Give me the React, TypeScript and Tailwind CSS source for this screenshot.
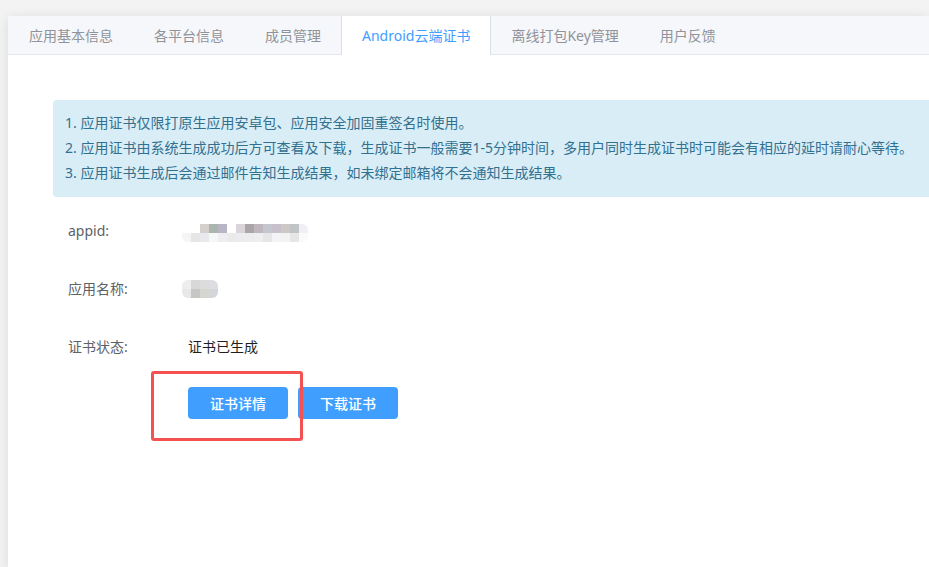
import React from "react";

const tabs = [
  "应用基本信息",
  "各平台信息",
  "成员管理",
  "Android云端证书",
  "离线打包Key管理",
  "用户反馈",
];

const notes = [
  "1. 应用证书仅限打原生应用安卓包、应用安全加固重签名时使用。",
  "2. 应用证书由系统生成成功后方可查看及下载，生成证书一般需要1-5分钟时间，多用户同时生成证书时可能会有相应的延时请耐心等待。",
  "3. 应用证书生成后会通过邮件告知生成结果，如未绑定邮箱将不会通知生成结果。",
];

// pixelated (mosaic) placeholders for hidden values
const appidMosaic = [
  { x: 18, y: 0, colors: ["#d6d0cc", "#a9b5ae", "#b8b5c6", "", "#d9d5d8", "#aaa6a7", "#bfb7bd", "#c4c7d0", "#c8c1cb", "#ccc9c4", "#c0c4c7", "#eef0f5"] },
  { x: 0, y: 9, colors: ["#f5f5f5", "#e6e6e6", "#e8e9ec", "#f6f7f7", "#efedf0", "#eaeaea", "#ececee", "#ebeced", "#eeeeee", "#e6e6e6", "#f4f4f6", "#f3f3f4", "#e8e6e5", "#fafafa"] },
];

const nameMosaic = [
  { x: 0, y: 0, colors: ["#eeeeee", "#d8d8d8", "#dcdcdc", "#dedee2"] },
  { x: 0, y: 9, colors: ["#e8e8e8", "#c6c6c4", "#d6d6d0", "#d4d6d9"] },
];

const Mosaic = ({ rows, width }: { rows: typeof appidMosaic; width: number }) => (
  <svg width={width} height={18} viewBox={`0 0 ${width} 18`}>
    <defs>
      <clipPath id={`c${width}`}>
        <rect x="0" y="0" width={width} height="18" rx="6" />
      </clipPath>
    </defs>
    <g clipPath={`url(#c${width})`}>
      {rows.map((r, i) =>
        r.colors.map((c, j) =>
          c ? <rect key={`${i}-${j}`} x={r.x + j * 9} y={r.y} width="9" height="9" fill={c} /> : null,
        ),
      )}
    </g>
  </svg>
);

const App = () => {
  return (
    <div
      className="h-[567px] w-[929px] overflow-hidden bg-[#f3f3f3] pl-2 pt-4"
      style={{ fontFamily: '"Noto Sans", "Noto Sans CJK SC", sans-serif' }}
    >
      <div className="h-full overflow-hidden bg-white shadow-[0_2px_12px_0_rgba(0,0,0,0.1)]">
        <div className="flex h-[39px] border-b border-[#e4e7ed] bg-[#f5f7fa]">
          {tabs.map((t, i) => (
            <div
              key={t}
              className={
                i === 3
                  ? "-ml-px h-[39px] whitespace-nowrap border-x border-[#dcdfe6] bg-white px-5 text-[14px] leading-[40px] text-[#409eff]"
                  : "-ml-px h-[38px] whitespace-nowrap border-x border-transparent px-5 text-[14px] leading-[40px] text-[#909399] first:ml-0"
              }
            >
              {t}
            </div>
          ))}
        </div>

        <div className="pl-[45px] pt-[45px]">
          <div className="w-[900px] rounded bg-[#d9edf7] pb-3 pl-3 pt-[10px] text-[14px] leading-[25px] text-[#31708f]">
            {notes.map((n) => (
              <p key={n} className="whitespace-nowrap">
                {n}
              </p>
            ))}
          </div>

          <div className="mt-[4px] pl-[15px] text-[14px]">
            <div className="flex h-[58px] items-center">
              <span className="w-[120px] text-[#606266]">appid:</span>
              <div className="-ml-[6px] mt-[5px]">
                <Mosaic rows={appidMosaic} width={126} />
              </div>
            </div>
            <div className="flex h-[58px] items-center">
              <span className="w-[120px] text-[#606266]">应用名称:</span>
              <div className="-ml-[6px] mt-[2px]">
                <Mosaic rows={nameMosaic} width={36} />
              </div>
            </div>
            <div className="flex h-[58px] items-center">
              <span className="w-[120px] text-[#606266]">证书状态:</span>
              <span className="text-[#1f1f1f]">证书已生成</span>
            </div>

            <div className="relative ml-[120px] mt-[12px] flex gap-[10px]">
              <button className="h-8 w-[100px] rounded bg-[#409eff] text-[14px] font-medium text-white">
                证书详情
              </button>
              <button className="h-8 w-[100px] rounded bg-[#409eff] text-[14px] font-medium text-white">
                下载证书
              </button>
              <div className="absolute -left-[37px] -top-4 h-[70px] w-[152px] rounded-[3px] border-[3px] border-[#f45252]" />
            </div>
          </div>
        </div>
      </div>
    </div>
  );
};

export default App;
